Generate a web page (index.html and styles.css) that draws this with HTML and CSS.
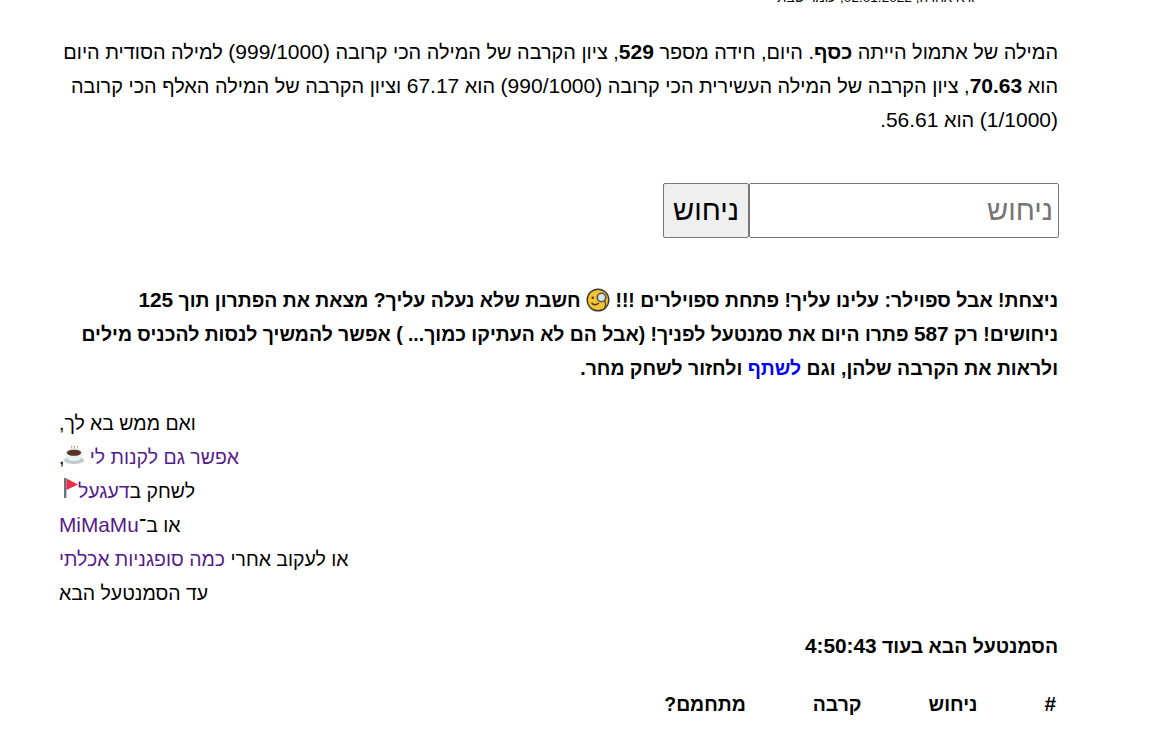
FILE: index.html
```html
<!DOCTYPE html>
<html lang="he" dir="rtl">
<head>
<meta charset="utf-8">
<title>סמנטעל</title>
<link rel="stylesheet" href="styles.css">
</head>
<body>
<main class="page">
  <div class="clip"><p class="byline">גיא אחרה, 02.01.2022, עומר שבת</p></div>
  <p class="intro">המילה של אתמול הייתה <b>כסף</b>. היום, חידה מספר <b class="num">529</b>, ציון הקרבה של המילה הכי קרובה <span class="num">(999/1000)</span> למילה הסודית היום הוא <b class="num">70.63</b>, ציון הקרבה של המילה העשירית הכי קרובה <span class="num">(990/1000)</span> הוא <span class="num">67.17</span> וציון הקרבה של המילה האלף הכי קרובה <span class="num">(1/1000)</span> הוא <span class="num">56.61</span>.</p>
  <form class="guess">
    <input class="guess-input" type="text" placeholder="ניחוש">
    <button class="guess-btn" type="button">ניחוש</button>
  </form>
  <p class="win"><b>ניצחת! אבל ספוילר: עלינו עליך! פתחת ספוילרים !!! <svg class="emoji face" viewBox="0 0 24 24"><circle cx="12" cy="12" r="10.8" fill="#f9c32b" stroke="#3a3a3a" stroke-width="1.4"/><circle cx="15.5" cy="9.5" r="4.2" fill="#d3e6f0" stroke="#555" stroke-width="1.6"/><circle cx="6.8" cy="9.8" r="1.3" fill="#3d3d3d"/><path d="M5.5 15c2.5 2.5 5 2 7.500 0" fill="none" stroke="#3d3d3d" stroke-width="1.4"/><path d="M19 12.500c.8 3 .6 6-.5 8.500" fill="none" stroke="#3d3d3d" stroke-width="1.200"/></svg> חשבת שלא נעלה עליך? מצאת את הפתרון תוך <span class="num">125</span> ניחושים! רק <span class="num">587</span> פתרו היום את סמנטעל לפניך! (אבל הם לא העתיקו כמוך... ) אפשר להמשיך לנסות להכניס מילים ולראות את הקרבה שלהן, וגם <a class="share" href="#">לשתף</a> ולחזור לשחק מחר.</b></p>
  <p class="links">ואם ממש בא לך,<br>
  <a href="#">אפשר גם לקנות לי <svg class="emoji" viewBox="0 0 24 24"><path d="M9 8c-1.500-2.500 1.500-3 0-6M12.500 8c-1.500-2.500 1.500-3 0-6M16 8c-1.500-2.500 1.500-3 0-6" fill="none" stroke="#b8917a" stroke-width="1.100"/><ellipse cx="12" cy="19.500" rx="12" ry="4.500" fill="#c2cbd0"/><path d="M1.500 10h21c0 7-3.500 10.500-10.500 10.500S1.500 17 1.500 10z" fill="#eef1f2"/><ellipse cx="12" cy="10" rx="10.500" ry="5" fill="#e3e8ea"/><ellipse cx="12" cy="10.500" rx="8.500" ry="3.700" fill="#5b3426"/></svg></a>,<br>
  לשחק ב<a href="#">דעגעל<svg class="emoji flag" viewBox="0 0 14 20"><rect x="0" y="0" width="2.400" height="20" fill="#66757f"/><path d="M2.400 .5 14 6.500 2.400 12z" fill="#e8304a"/></svg></a><br>
  או ב־<a class="num" href="#">MiMaMu</a><br>
  או לעקוב אחרי <a href="#">כמה סופגניות אכלתי</a><br>
  עד הסמנטעל הבא</p>
  <p class="timer"><b>הסמנטעל הבא בעוד <span class="num">4:50:43</span></b></p>
  <table class="guesses">
    <tr><th><span class="num">#</span></th><th>ניחוש</th><th>קרבה</th><th>מתחמם?</th></tr>
  </table>
</main>
</body>
</html>
```
FILE: styles.css
```css
html, body {
  margin: 0;
  height: 730px;
  overflow: hidden;
  background: #fff;
}
body {
  font-family: "Liberation Sans", Arial, sans-serif;
  font-size: 20px;
  line-height: 34px;
  color: #000;
}
.page {
  width: 999px;
  margin-right: 115px;
  margin-left: auto;
}
.clip {
  height: 6px;
  overflow: hidden;
  display: flex;
  align-items: flex-end;
  padding-right: 85px;
}
.byline {
  margin: 0 0 -2px;
  font-size: 13.6px;
  line-height: 20px;
  flex: none;
}
.num {
  font-size: 20.8px;
  line-height: 1;
}
.intro {
  margin: 29px 1px 0 0;
  font-size: 19.9px;
}
.intro .num {
  font-size: 21px;
}
.guess {
  display: flex;
  margin: 46px 0 0;
}
.guess-input {
  box-sizing: border-box;
  width: 310px;
  height: 55px;
  border: 1px solid #767676;
  border-radius: 2px;
  padding: 1px 5px 1px 2px;
  font: 29px "Liberation Sans", Arial, sans-serif;
  background: #fff;
  margin: 0;
}
.guess-input::placeholder {
  color: #757575;
}
.guess-btn {
  box-sizing: border-box;
  width: 86px;
  height: 55px;
  border: 1px solid #767676;
  border-radius: 2px;
  background: #efefef;
  padding: 1px 6px;
  font: 29px "Liberation Sans", Arial, sans-serif;
  color: #000;
  margin: 0;
}
.win {
  margin: 45px 1px 0 0;
  font-size: 19.4px;
}
.links {
  margin: 21px 0 0 -1px;
  font-size: 19.45px;
  text-align: left;
}
.timer {
  margin: 19px 1px 0 0;
  font-size: 19.4px;
}
a {
  color: #551a8b;
  text-decoration: none;
}
a.share {
  color: #00e;
}
.emoji {
  width: 20px;
  height: 20px;
}
.face {
  width: 24px;
  height: 24px;
  vertical-align: -5px;
}
.flag {
  width: 14px;
  margin-left: 5px;
}
.guesses {
  margin-top: 24px;
  border-collapse: collapse;
}
.guesses th {
  padding: 0 3px 0 64px;
  font-size: 19.4px;
  text-align: right;
  font-weight: bold;
}
```
